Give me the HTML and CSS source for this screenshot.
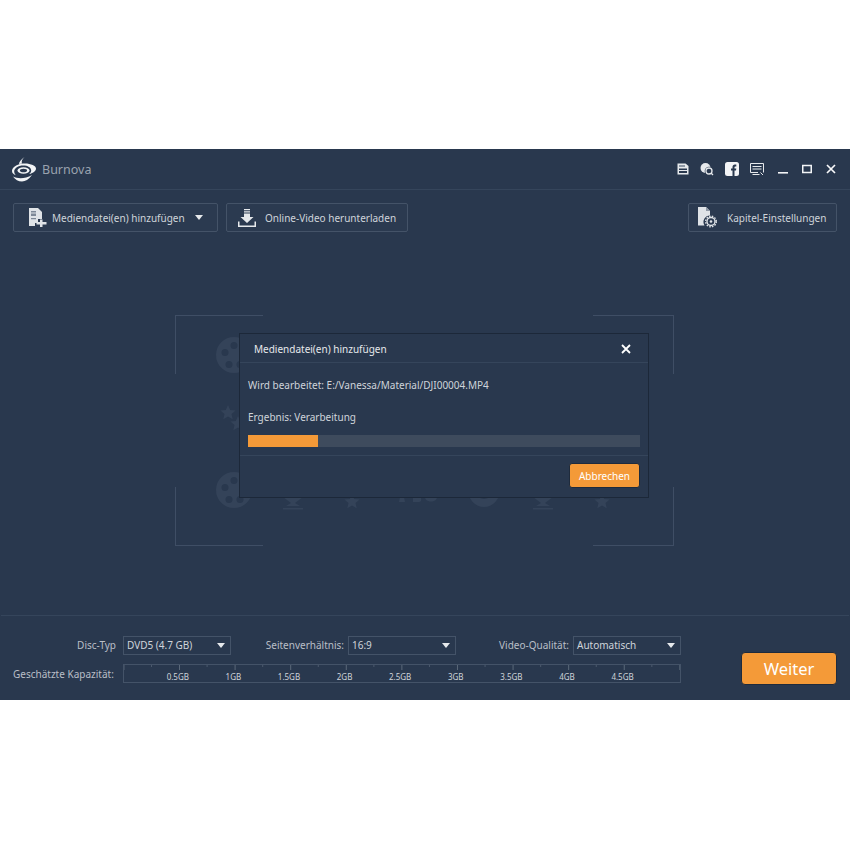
FILE: index.html
```html
<!DOCTYPE html>
<html lang="de">
<head>
<meta charset="UTF-8">
<title>Burnova</title>
<link rel="stylesheet" href="styles.css">
</head>
<body>

<div class="app">
    <div class="titlebar">
        <svg class="logo" width="26" height="25" viewBox="0 0 26 25">
            <path d="M13.500 0c-3 2.500-5.500 4.500-5.500 7l3-.6c-.8-2 0-4 2.500-6.400z" fill="#f2f4f6"/>
            <path d="M12 6.500C5.500 7 1 10.500 1 14c0 2 1.500 3.500 4 4.300-1.200-1-1.800-2.300-1.800-3.800 0-3.300 4-6 9-6 4.500 0 8 2 8 5 0 1.500-.8 2.700-2 3.600C22.500 16 25 14 25 11.500 25 8.500 19 6 12 6.500z" fill="#f2f4f6"/>
            <ellipse cx="12.500" cy="13.500" rx="6" ry="3.300" fill="#f2f4f6"/>
            <ellipse cx="12.500" cy="13.500" rx="3.600" ry="1.800" fill="#29384e"/>
            <path d="M2 19.500c5 2.500 12 2.500 19-1.500-3.500 4.500-6.500 6.500-10 6.500-3.500 0-7-2-9-5z" fill="#f2f4f6"/>
        </svg>
        <span class="app-name">Burnova</span>
        <div class="win-icons">
            <div class="tool-icons">
                <svg width="12" height="12" viewBox="0 0 12 12"><path d="M.5.500h8L11.500 3v8.500H.5z" fill="#e6e9ec"/><path d="M2 2h6v2H2z" fill="#8f99a6"/><path d="M2 5.500h8V7H2zM2 8h8v2H2z" fill="#29384e"/></svg>
                <svg width="14" height="14" viewBox="0 0 14 14"><circle cx="5.500" cy="6" r="5" fill="#e6e9ec"/><circle cx="9" cy="9" r="4.300" fill="#29384e"/><circle cx="9" cy="9" r="3" fill="none" stroke="#e6e9ec" stroke-width="1.300"/><path d="M11 11l2 2" stroke="#e6e9ec" stroke-width="1.300"/></svg>
                <svg width="14" height="14" viewBox="0 0 14 14"><rect width="14" height="14" rx="2.500" fill="#f2f4f6"/><path d="M7.500 14V8.500H6V6.500h1.500V5c0-1.600 1-2.500 2.400-2.500h1.400v2h-1c-.6 0-.8.300-.8.800v1.200h1.800l-.3 2H9.500V14z" fill="#29384e"/></svg>
                <svg width="14" height="13" viewBox="0 0 14 13"><path d="M8 9.500H.5V.5h13v9" fill="none" stroke="#e6e9ec"/><path d="M2.500 3h9v1h-9zM2.500 5.500h9v1h-9zM2.500 11h7v1h-7z" fill="#e6e9ec"/><path d="M10.500 9.500l2.500 2.500" stroke="#e6e9ec"/></svg>
            </div>
            <svg width="10" height="12" viewBox="0 0 10 12"><path d="M0 9h10v1.600H0z" fill="#f2f4f6"/></svg>
            <svg width="10" height="10" viewBox="0 0 10 10"><path d="M.75 1.500h8.500v7H.75z" fill="none" stroke="#f2f4f6" stroke-width="1.500"/></svg>
            <svg width="10" height="10" viewBox="0 0 10 10"><path d="M1 1l8 8M9 1L1 9" stroke="#f8f9fa" stroke-width="1.700"/></svg>
        </div>
    </div>

    <div class="toolbar">
        <button class="tool-btn add-btn">
            <svg width="18" height="19" viewBox="0 0 18 19"><path d="M0 0h9l4 4v7H9v4H6v3H0z" fill="#dfe3e7"/><path d="M2 3h5v5H2zM2 10h5v1.200H2z" fill="#7d8897"/><path d="M2 4.500h5v1H2z" fill="#dfe3e7"/><path d="M11 11.500h2.500V14H17.500v2.500h-4V19H11v-2.500H7.500V14H11z" fill="#dfe3e7"/></svg>
            <span>Mediendatei(en) hinzufügen</span>
            <i class="caret"></i>
        </button>
        <button class="tool-btn online-btn">
            <svg width="18" height="18" viewBox="0 0 18 18"><path d="M6 0h6v1.200H6zM6 2.200h6v1.200H6zM6 4.400h6V8h3.500L9 14 2.500 8H6z" fill="#e6e9ec"/><path d="M0 12.500h1.500v4h15v-4H18V18H0z" fill="#e6e9ec"/></svg>
            <span>Online-Video herunterladen</span>
        </button>
        <button class="tool-btn chapter-btn">
            <svg width="20" height="21" viewBox="0 0 20 21"><path d="M0 0h8l4 4v4.500a6.500 6.500 0 0 0-5.500 10H0z" fill="#dfe3e7"/><path d="M8 0l4 4H8z" fill="#8f99a6"/><circle cx="13" cy="14.500" r="4" fill="none" stroke="#dfe3e7" stroke-width="1.400"/><circle cx="13" cy="14.500" r="5.300" fill="none" stroke="#dfe3e7" stroke-width="1.400" stroke-dasharray="1.500 1.300"/><circle cx="13" cy="14.500" r="1.300" fill="#dfe3e7"/></svg>
            <span>Kapitel-Einstellungen</span>
        </button>
    </div>

    <div class="stage">
        <div class="drop-area">
            <i class="corner tl"></i><i class="corner tr"></i><i class="corner bl"></i><i class="corner br"></i>
            <svg class="watermark" width="499" height="231" viewBox="0 0 499 231">
                <g fill="#344359">
                    <path fill-rule="evenodd" d="M59 22a18 18 0 1 0 0 36 18 18 0 0 0 0-36zm0 5a3.500 3.500 0 1 1 0 7 3.500 3.500 0 0 1 0-7zm-9 7a3.500 3.500 0 1 1 0 7 3.500 3.500 0 0 1 0-7zm18 0a3.500 3.500 0 1 1 0 7 3.500 3.500 0 0 1 0-7zm-14 12a3.500 3.500 0 1 1 0 7 3.500 3.500 0 0 1 0-7zm11 0a3.500 3.500 0 1 1 0 7 3.500 3.500 0 0 1 0-7z"/>
                    <path fill-rule="evenodd" d="M59 157a18 18 0 1 0 0 36 18 18 0 0 0 0-36zm0 5a3.500 3.500 0 1 1 0 7 3.500 3.500 0 0 1 0-7zm-9 7a3.500 3.500 0 1 1 0 7 3.500 3.500 0 0 1 0-7zm18 0a3.500 3.500 0 1 1 0 7 3.500 3.500 0 0 1 0-7zm-14 12a3.500 3.500 0 1 1 0 7 3.500 3.500 0 0 1 0-7zm11 0a3.500 3.500 0 1 1 0 7 3.500 3.500 0 0 1 0-7z"/>
                    <path d="M53 90l2.200 5 5.300.5-4 3.500 1.200 5.300-4.700-2.800-4.700 2.800 1.200-5.300-4-3.500 5.300-.5z"/>
                    <path d="M63 101l2.200 5 5.300.5-4 3.500 1.200 5.300-4.700-2.800-4.700 2.800 1.200-5.300-4-3.500 5.300-.5z"/>
                    <path d="M177 179l2.200 5 5.300.5-4 3.500 1.200 5.300-4.700-2.800-4.700 2.800 1.200-5.300-4-3.500 5.300-.5z"/>
                    <path d="M427 179l2.200 5 5.300.5-4 3.500 1.200 5.300-4.700-2.800-4.700 2.800 1.200-5.300-4-3.500 5.300-.5z"/>
                    <path d="M108 182h20l-8 6 5 3h-14l5-3zM108 193h20v1.500h-20z"/>
                    <path d="M358 182h20l-8 6 5 3h-14l5-3zM358 193h20v1.500h-20z"/>
                    <path d="M293 175a16 17 0 0 0 32 0z"/>
                    <path d="M225 182h4l1 5h-6zM238 182h6c3 0 3 5 0 5h-6zM250 182h12c0 6-12 6-12 0z"/>
                </g>
                <path d="M300 175a9 9 0 0 0 18 0z" fill="#29384e"/>
            </svg>
        </div>

        <div class="dialog">
            <div class="dialog-head">
                <span>Mediendatei(en) hinzufügen</span>
                <svg width="10" height="10" viewBox="0 0 10 10"><path d="M1 1l8 8M9 1L1 9" stroke="#fff" stroke-width="1.800"/></svg>
            </div>
            <div class="dialog-body">
                <p class="file-line">Wird bearbeitet: E:/Vanessa/Material/DJI00004.MP4</p>
                <p class="result-line">Ergebnis: Verarbeitung</p>
                <div class="progress"><div class="progress-fill" style="width: 70px"></div></div>
            </div>
            <div class="dialog-foot">
                <button class="cancel-btn">Abbrechen</button>
            </div>
        </div>
    </div>

    <div class="footer">
        <div class="footer-left">
            <div class="option-row">
                <label class="disc-label">Disc-Typ</label>
                <div class="select disc-select">DVD5 (4.7 GB)<i class="caret"></i></div>
                <label class="ratio-label">Seitenverhältnis:</label>
                <div class="select ratio-select">16:9<i class="caret"></i></div>
                <label class="quality-label">Video-Qualität:</label>
                <div class="select quality-select">Automatisch<i class="caret"></i></div>
            </div>
            <div class="capacity-row">
                <label class="capacity-label">Geschätzte Kapazität:</label>
                <div class="capacity-bar">
                    <div class="ticks"></div>
                    <div class="sizes">
                        <span>0.5GB</span><span>1GB</span><span>1.5GB</span><span>2GB</span><span>2.5GB</span><span>3GB</span><span>3.5GB</span><span>4GB</span><span>4.5GB</span>
                    </div>
                </div>
            </div>
        </div>
        <button class="next-btn">Weiter</button>
    </div>
</div>

</body>
</html>
```

FILE: styles.css
```css
body {
    margin: 0;
    background-color: #fff;
    font-family: "Noto Sans", "DejaVu Sans", sans-serif;
    font-size: 10px;
}

.app {
    display: flex;
    flex-direction: column;
    height: 551px;
    margin-top: 149px;
    background-color: #29384e;
    color: #cfd4da;
}

button {
    font-family: inherit;
    cursor: pointer;
}

.titlebar {
    display: flex;
    align-items: center;
    height: 40px;
    padding: 0 14px 0 11px;
    border-bottom: 1px solid #35455b;
}

.logo {
    margin-right: 5px;
}

.app-name {
    font-size: 12.500px;
    color: #9aa3ae;
}

.win-icons {
    display: flex;
    align-items: center;
    gap: 14px;
    margin-left: auto;
}

.tool-icons {
    display: flex;
    align-items: center;
    gap: 11px;
}

.toolbar {
    display: flex;
    padding: 13px 13px 0;
    height: 42px;
}

.tool-btn {
    display: flex;
    align-items: center;
    height: 29px;
    padding: 0;
    background-color: #2b3a50;
    border: 1px solid #445368;
    border-radius: 2px;
    color: #cfd4da;
    font-size: 10px;
}

.add-btn {
    width: 205px;
    padding-left: 15px;
    gap: 5px;
}

.online-btn {
    width: 182px;
    margin-left: 8px;
    padding-left: 11px;
    gap: 9px;
}

.chapter-btn {
    width: 149px;
    margin-left: auto;
    padding-left: 9px;
    gap: 9px;
}

.caret {
    display: block;
    width: 0;
    height: 0;
    border-left: 4.500px solid transparent;
    border-right: 4.500px solid transparent;
    border-top: 5px solid #e6e9ec;
}

.add-btn .caret {
    margin-left: 5px;
}

.stage {
    position: relative;
    flex: 1;
    padding: 70px 176px 0 175px;
}

.drop-area {
    position: relative;
    height: 231px;
}

.watermark {
    display: block;
}

.corner {
    position: absolute;
    height: 58px;
    border: 0 solid #3f4e65;
}

.tl { left: 0; top: 0; width: 87px; border-width: 1px 0 0 1px; }
.tr { right: 0; top: 0; width: 80px; border-width: 1px 1px 0 0; }
.bl { left: 0; bottom: 0; width: 87px; border-width: 0 0 1px 1px; }
.br { right: 0; bottom: 0; width: 80px; border-width: 0 1px 1px 0; }

.dialog {
    position: absolute;
    left: 239px;
    top: 88px;
    width: 408px;
    height: 163px;
    background-color: #29384e;
    border: 1px solid #1c2839;
}

.dialog-head {
    display: flex;
    align-items: center;
    justify-content: space-between;
    height: 27px;
    padding: 1px 17px 0 14px;
    border-bottom: 1px solid #35455b;
    color: #e6e9ec;
}

.dialog-body {
    height: 92px;
    padding: 0 8px;
    border-bottom: 1px solid #35455b;
}

.file-line {
    margin: 0;
    padding-top: 16px;
    line-height: 13px;
}

.result-line {
    margin: 0;
    padding-top: 19px;
    line-height: 13px;
}

.progress {
    height: 12px;
    margin-top: 11px;
    background-color: #3e4b5d;
}

.progress-fill {
    height: 100%;
    background-color: #f49a38;
}

.dialog-foot {
    display: flex;
    justify-content: flex-end;
    padding: 7px 8px 0;
}

.cancel-btn {
    width: 71px;
    height: 25px;
    padding: 0;
    background-color: #f49a38;
    border: 1px solid #1f2b3c;
    border-radius: 3px;
    color: #fff;
    font-size: 10px;
}

.footer {
    display: flex;
    height: 84px;
    margin: 0 1px;
    border-top: 1px solid #35455b;
}

.footer-left {
    flex: 1;
    padding-top: 19px;
}

.option-row {
    display: flex;
    align-items: center;
    height: 20px;
}

.option-row label {
    color: #b9bfc7;
    text-align: right;
}

.disc-label { width: 115px; }
.ratio-label { width: 113px; margin-right: 4px; }
.quality-label { width: 113px; margin-right: 4px; }

.select {
    display: flex;
    align-items: center;
    justify-content: space-between;
    box-sizing: border-box;
    width: 108px;
    height: 19px;
    padding: 0 5px 0 3px;
    border: 1px solid #445368;
    color: #cfd4da;
}

.disc-select { margin-left: 7px; }

.capacity-row {
    display: flex;
    align-items: center;
    margin-top: 9px;
}

.capacity-label {
    width: 110px;
    margin-left: 12px;
    color: #b9bfc7;
    white-space: nowrap;
}

.capacity-bar {
    box-sizing: border-box;
    width: 558px;
    height: 19px;
    border: 1px solid #445368;
}

.ticks {
    height: 5px;
    background-image:
        linear-gradient(to right, #5a6879 1px, transparent 1px),
        linear-gradient(to right, #4a586c 1px, transparent 1px);
    background-size: 55.600px 5px, 55.600px 2px;
    background-position: 55px 0, 27px 0;
    background-repeat: repeat-x;
}

.sizes {
    display: flex;
    padding-top: 1px;
    padding-left: 26px;
    font-size: 8px;
    line-height: 12px;
    color: #cfd4da;
}

.sizes span {
    width: 55.600px;
    text-align: center;
}

.next-btn {
    width: 96px;
    height: 33px;
    margin: 36px 12px 0 0;
    padding: 0;
    background-color: #f49a38;
    border: 1px solid #1f2b3c;
    border-radius: 4px;
    color: #fff;
    font-size: 16.500px;
}
```
